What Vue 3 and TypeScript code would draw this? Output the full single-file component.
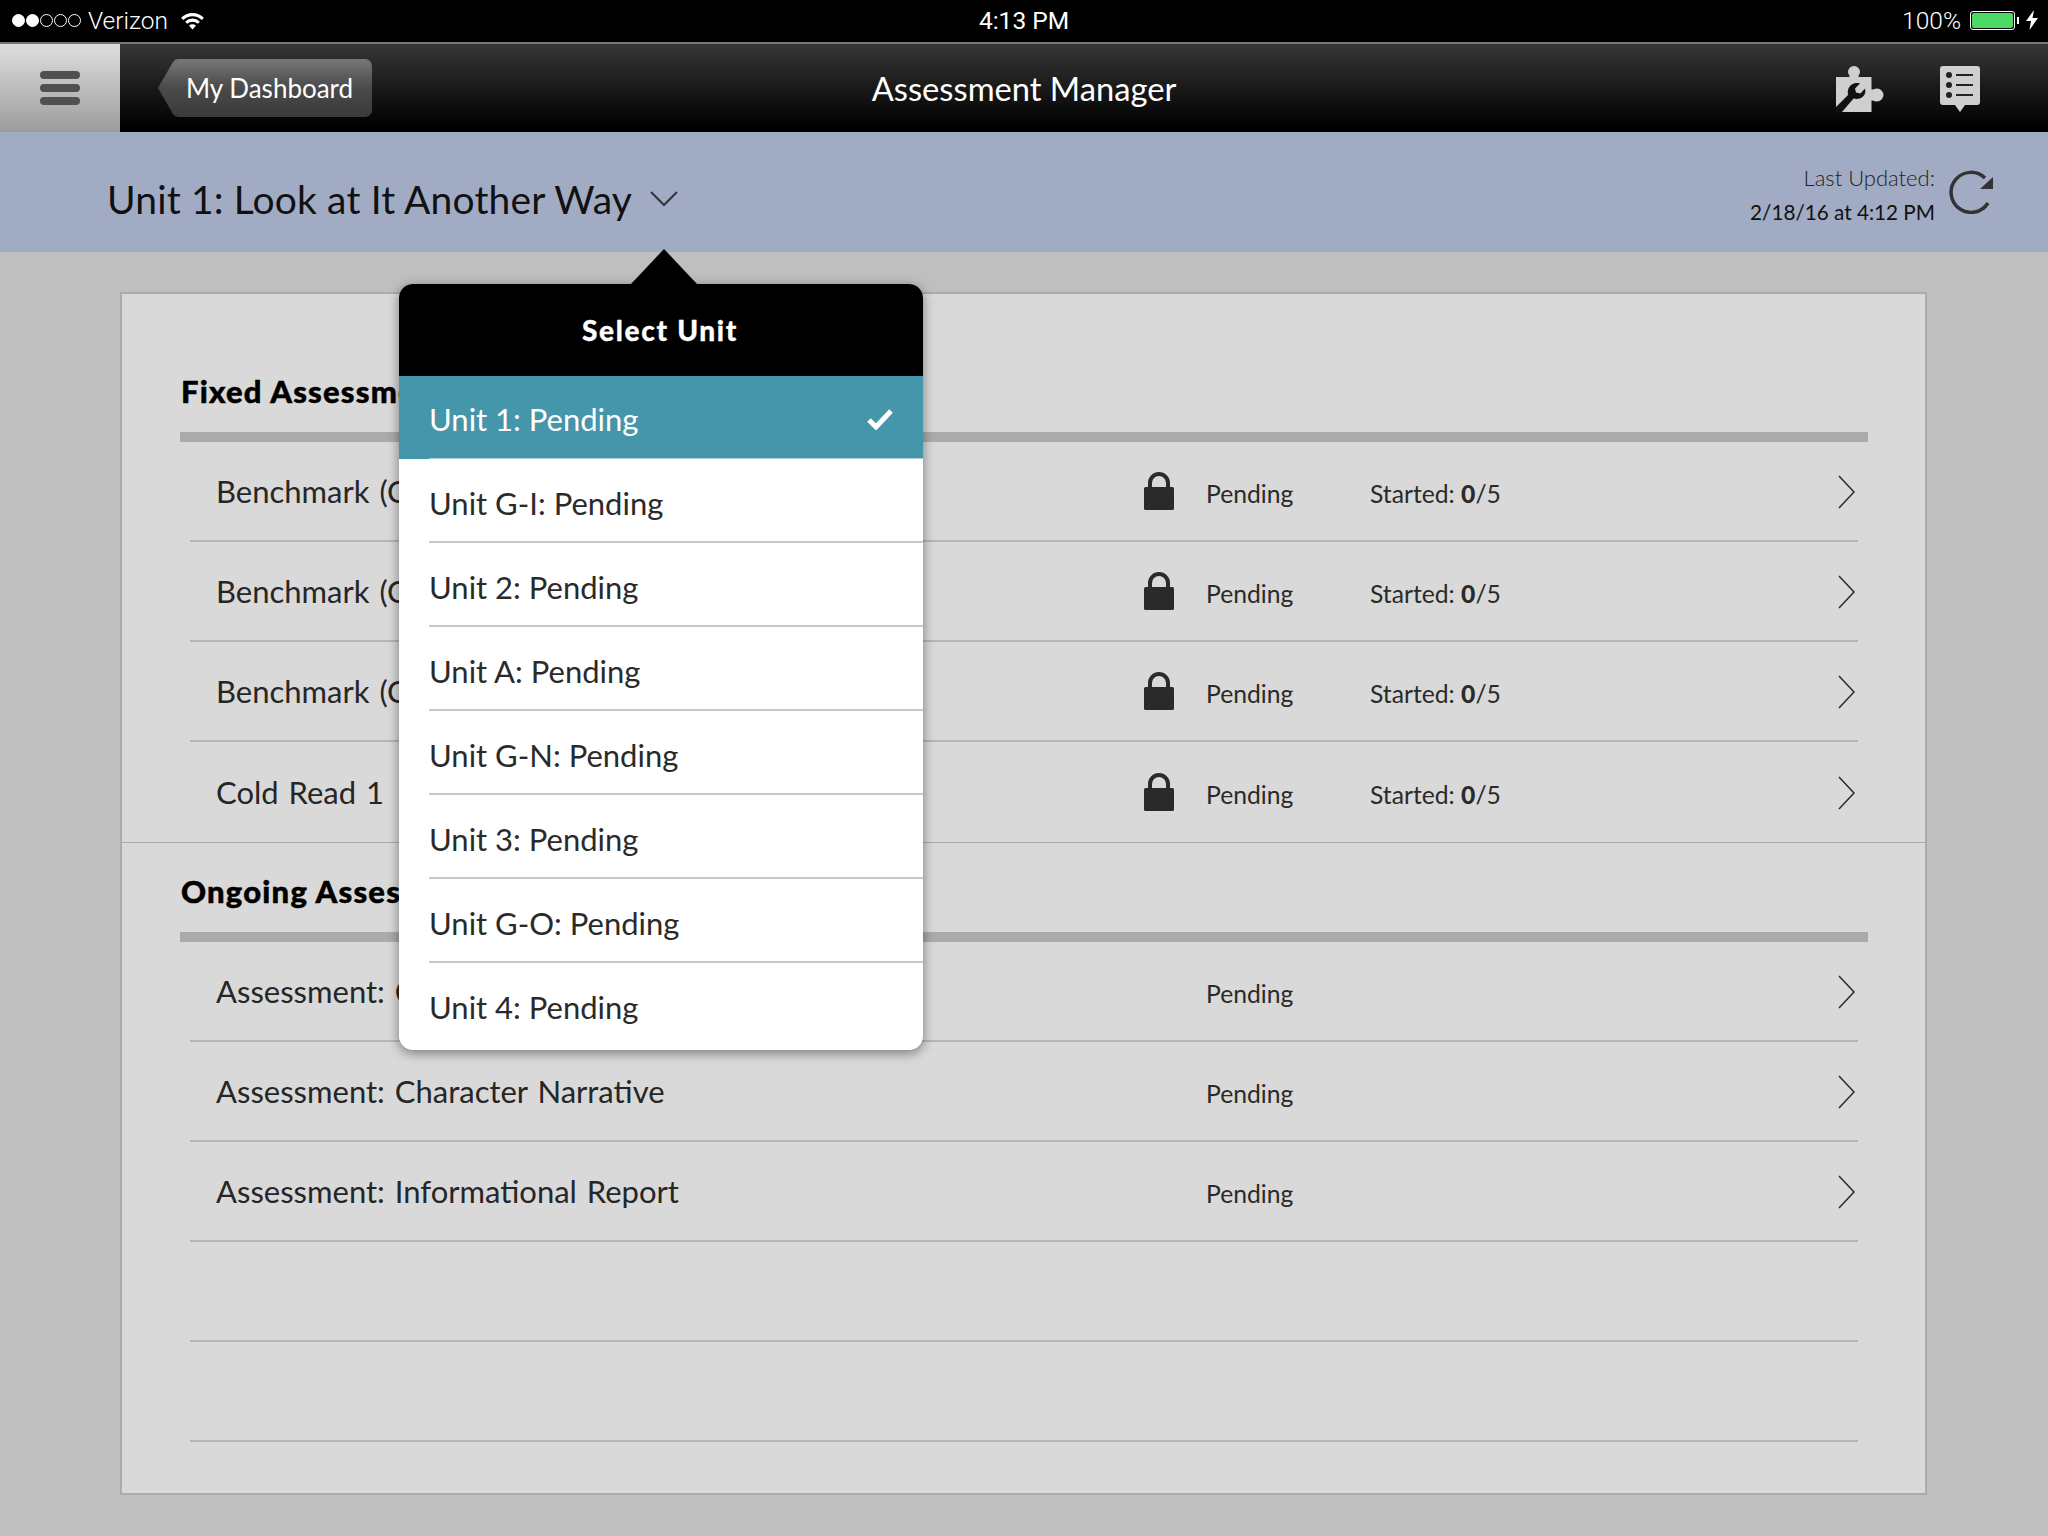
<script setup lang="ts">
interface Row { title: string; locked: boolean; started: boolean }
const fixedRows: Row[] = [
  { title: 'Benchmark (C', locked: true, started: true },
  { title: 'Benchmark (C', locked: true, started: true },
  { title: 'Benchmark (C', locked: true, started: true },
  { title: 'Cold Read 1', locked: true, started: true },
]
const ongoingRows: Row[] = [
  { title: 'Assessment: C', locked: false, started: false },
  { title: 'Assessment: Character Narrative', locked: false, started: false },
  { title: 'Assessment: Informational Report', locked: false, started: false },
]
const units: string[] = ['Unit G-I: Pending', 'Unit 2: Pending', 'Unit A: Pending', 'Unit G-N: Pending', 'Unit 3: Pending', 'Unit G-O: Pending', 'Unit 4: Pending']
</script>

<template>
  <div class="page">
    <div class="status">
      <div class="status-left">
        <span class="dots"><i class="on"></i><i class="on"></i><i></i><i></i><i></i></span>
        <span class="carrier">Verizon</span>
        <svg class="wifi" width="25" height="19" viewBox="0 0 26 20">
          <path d="M1 7 A17 17 0 0 1 25 7 L22.800 9.400 A14 14 0 0 0 3.200 9.400Z" fill="#fff"/>
          <path d="M5.200 11.200 A11 11 0 0 1 20.800 11.200 L18.600 13.500 A8 8 0 0 0 7.400 13.500Z" fill="#fff"/>
          <path d="M9.400 15.400 A5.200 5.200 0 0 1 16.600 15.400 L13 19.400Z" fill="#fff"/>
        </svg>
      </div>
      <div class="clock">4:13 PM</div>
      <div class="status-right">
        <span class="pct">100%</span>
        <span class="battery"><span class="level"></span></span>
        <span class="nub"></span>
        <svg class="bolt" width="12" height="20" viewBox="0 0 12 20"><path d="M8 0 L0 11 H5 L3.500 20 L12 8 H6.500Z" fill="#fff"/></svg>
      </div>
    </div>

    <header class="nav">
      <button class="menu-btn" aria-label="Menu"><i></i><i></i><i></i></button>
      <div class="back">
        <svg class="back-tip" width="24" height="58" viewBox="0 0 24 58">
          <defs><linearGradient id="tipg" x1="0" y1="0" x2="0" y2="1"><stop offset="0" stop-color="#777"/><stop offset="0.5" stop-color="#4a4a4a"/><stop offset="1" stop-color="#3a3a3a"/></linearGradient></defs>
          <path d="M24 0 H20 Q17 0 15 3 L0 29 L15 55 Q17 58 20 58 H24Z" fill="url(#tipg)"/>
        </svg>
        <span class="back-body">My Dashboard</span>
      </div>
      <div class="nav-title">Assessment Manager</div>
      <div class="nav-icons">
        <svg width="48" height="47" viewBox="0 0 48 47">
          <path d="M0 11 H13.500 C14 9.500 12 8 12 6 A6 6 0 0 1 24 6 C24 8 22 9.500 22.500 11 H35.500 V23.500 C37 24 38.500 22.500 41 22.500 A6.500 6.500 0 0 1 41 35.500 C38.500 35.500 37 34 35.500 34.500 V46 H8 L0 46Z" fill="#cfcfcf"/>
          <path d="M0 41 L12 29 C11 24 13 19 18 17.500 C20.500 16.800 22.500 17 24 17.500 L19 22.500 L20 26.500 L24.500 27.500 L29 22.500 C30 26 29 29 26.500 31 C24 33 20.500 33.500 17.500 32.500 L6 46 H0Z" fill="#111"/>
        </svg>
        <svg width="40" height="47" viewBox="0 0 40 47">
          <path d="M3 0 H37 Q40 0 40 3 V36 Q40 39 37 39 H25 L20 46 L15 39 H3 Q0 39 0 36 V3 Q0 0 3 0Z" fill="#cfcfcf"/>
          <circle cx="9" cy="9" r="3" fill="#222"/><circle cx="9" cy="19" r="3" fill="#222"/><circle cx="9" cy="29" r="3" fill="#222"/>
          <path d="M16 9 H33 M16 19 H33 M16 29 H33" stroke="#222" stroke-width="2"/>
        </svg>
      </div>
    </header>

    <div class="unit-bar">
      <div class="unit-name">Unit 1: Look at It Another Way</div>
      <svg class="unit-chev" width="28" height="16" viewBox="0 0 28 16"><path d="M1 1 L14 14 L27 1" fill="none" stroke="#333" stroke-width="2"/></svg>
      <div class="updated">
        <div class="upd-label">Last Updated:</div>
        <div class="upd-date">2/18/16 at 4:12 PM</div>
      </div>
      <svg class="refresh" width="46" height="44" viewBox="0 0 46 44">
        <path d="M39 33 A20 20 0 1 1 36 8" fill="none" stroke="#333" stroke-width="3.500"/>
        <path d="M44 7 V19 H31Z" fill="#333"/>
      </svg>
    </div>

    <main class="content">
      <section class="card">
        <div class="section first">
          <h2>Fixed Assessments</h2>
          <div class="rule"></div>
          <div v-for="(r, i) in fixedRows" :key="i" class="row">
            <div class="title">{{ r.title }}</div>
            <div class="lock-cell">
              <svg v-if="r.locked" width="30" height="38" viewBox="0 0 30 38">
                <path d="M6 16 V11 A9 9 0 0 1 24 11 V16" fill="none" stroke="#2a2a2a" stroke-width="4"/>
                <rect x="0" y="15" width="30" height="23" rx="1.500" fill="#2a2a2a"/>
              </svg>
            </div>
            <div class="state">Pending</div>
            <div class="started"><template v-if="r.started">Started: <b>0</b>/5</template></div>
            <svg class="chev" width="18" height="34" viewBox="0 0 18 34"><path d="M1 1 L16 17 L1 33" fill="none" stroke="#2a2a2a" stroke-width="1.500"/></svg>
          </div>
        </div>
        <div class="section">
          <h2>Ongoing Assessments</h2>
          <div class="rule"></div>
          <div v-for="(r, i) in ongoingRows" :key="i" class="row">
            <div class="title">{{ r.title }}</div>
            <div class="lock-cell"></div>
            <div class="state">Pending</div>
            <div class="started"></div>
            <svg class="chev" width="18" height="34" viewBox="0 0 18 34"><path d="M1 1 L16 17 L1 33" fill="none" stroke="#2a2a2a" stroke-width="1.500"/></svg>
          </div>
          <div class="row"></div>
          <div class="row"></div>
        </div>
      </section>
    </main>

    <div class="popover">
      <svg class="pop-arrow" width="68" height="36" viewBox="0 0 68 36"><path d="M0 36 L34 0 L68 36Z" fill="#000"/></svg>
      <div class="pop-head">Select Unit</div>
      <div class="pop-item selected">
        <span>Unit 1: Pending</span>
        <svg width="26" height="22" viewBox="0 0 26 22"><path d="M2 12 L9 19 L24 3" fill="none" stroke="#fff" stroke-width="5"/></svg>
      </div>
      <div v-for="u in units" :key="u" class="pop-item">
        <span>{{ u }}</span>
      </div>
    </div>
  </div>
</template>

<style>
html, body { margin: 0; background: #bfbfbf; }
</style>

<style scoped>
.page {
  position: relative;
  width: 2048px;
  height: 1536px;
  overflow: hidden;
  background: #bfbfbf;
  font-family: Lato, "Liberation Sans", sans-serif;
  color: #2a2a2a;
}
.status {
  height: 42px;
  box-sizing: border-box;
  padding-bottom: 2px;
  background: #000;
  color: #fff;
  display: grid;
  grid-template-columns: 1fr auto 1fr;
  align-items: center;
  font-family: Roboto, "Liberation Sans", sans-serif;
  font-weight: 300;
  font-size: 24.500px;
}
.clock { font-weight: 400; font-size: 24.500px; }
.status-left { display: flex; align-items: center; padding-left: 12px; }
.dots { display: flex; gap: 1px; margin-right: 7px; }
.dots i { width: 13px; height: 13px; box-sizing: border-box; border-radius: 50%; border: 1px solid #fff; }
.dots i.on { background: #fff; }
.wifi { margin-left: 12px; }
.status-right { display: flex; align-items: center; justify-content: flex-end; padding-right: 10px; }
.pct { margin-right: 9px; }
.battery { width: 45px; height: 19px; box-sizing: border-box; border: 1px solid #fff; border-radius: 3px; padding: 1px; display: flex; }
.level { flex: 1; background: #4cd964; border-radius: 2px; }
.nub { width: 2px; height: 7px; background: #fff; margin: 0 7px 0 2px; }
.nav {
  height: 90px;
  box-sizing: border-box;
  border-top: 2px solid #777;
  background: linear-gradient(#363636, #000 95%);
  display: flex;
  align-items: center;
  position: relative;
}
.menu-btn {
  width: 120px;
  height: 88px;
  border: 0;
  padding: 0;
  background: linear-gradient(#dedede, #9c9c9c);
  display: flex;
  flex-direction: column;
  align-items: center;
  justify-content: center;
  gap: 5px;
}
.menu-btn i { width: 40px; height: 8px; border-radius: 4px; background: #505050; }
.back { display: flex; align-items: center; margin-left: 38px; height: 58px; }
.back-tip { display: block; }
.back-body {
  height: 58px;
  line-height: 58px;
  padding: 0 19px 0 4px;
  color: #fff;
  font-size: 26px;
  background: linear-gradient(#777, #4a4a4a 50%, #3a3a3a);
  border-radius: 0 7px 7px 0;
  white-space: nowrap;
}
.nav-title {
  position: absolute;
  left: 0;
  right: 0;
  text-align: center;
  color: #fff;
  font-size: 32.700px;
  pointer-events: none;
}
.nav-icons { margin-left: auto; display: flex; align-items: center; gap: 56px; padding: 2px 68px 0 0; }
.unit-bar {
  height: 120px;
  background: #a2abc4;
  display: flex;
  align-items: center;
  padding-left: 107px;
  padding-right: 53px;
  color: #111;
}
.unit-name { font-size: 39px; letter-spacing: 0.150px; white-space: nowrap; margin-top: 14px; }
.unit-chev { margin-left: 18px; margin-top: 14px; }
.updated { margin-left: auto; text-align: right; margin-top: 6px; }
.upd-label { font-size: 22px; font-weight: 300; line-height: 34px; color: #222; }
.upd-date { font-size: 20.700px; line-height: 34px; color: #111; }
.refresh { margin-left: 14px; }
.content { padding: 40px 121px 0 120px; }
.card {
  height: 1203px;
  box-sizing: border-box;
  border: 2px solid #ababab;
  background: #d9d9d9;
}
.section { padding: 0 57px 0 58px; }
.section.first { padding-top: 49px; border-bottom: 1px solid #ababab; }
h2 {
  margin: 0;
  height: 89px;
  box-sizing: border-box;
  padding-top: 28px;
  padding-left: 1px;
  font-size: 31px;
  line-height: 40px;
  font-weight: 900;
  letter-spacing: 1.200px;
  -webkit-text-stroke: 0.500px #000;
  color: #000;
  white-space: nowrap;
}
.rule { height: 10px; background: #ababab; }
.row {
  height: 100px;
  box-sizing: border-box;
  margin: 0 10px;
  border-bottom: 2px solid #b6b6b6;
  display: grid;
  grid-template-columns: 954px 62px 164px 1fr 18px;
  align-items: center;
  padding-right: 2px;
}
.first .row:last-child { border-bottom: 0; }
.title { padding-left: 26px; font-size: 31px; word-spacing: 2px; white-space: nowrap; color: #262626; }
.lock-cell { display: flex; align-items: center; }
.state, .started { font-size: 24.700px; padding-top: 5px; white-space: nowrap; }
.started b { font-weight: 900; }
.chev { display: block; margin-top: 2px; }
.popover {
  position: absolute;
  left: 399px;
  top: 284px;
  width: 524px;
  height: 766px;
  border-radius: 14px;
  background: #fff;
  box-shadow: 0 3px 12px rgba(0, 0, 0, 0.45);
}
.pop-arrow { position: absolute; left: 231px; top: -35px; display: block; }
.pop-head {
  height: 92px;
  box-sizing: border-box;
  border-radius: 14px 14px 0 0;
  background: #000;
  color: #fff;
  font-weight: 900;
  font-size: 28px;
  letter-spacing: 1.700px;
  -webkit-text-stroke: 0.300px #fff;
  display: flex;
  align-items: center;
  justify-content: center;
  padding-right: 2px;
  position: relative;
}
.pop-item {
  height: 84px;
  box-sizing: border-box;
  margin-left: 30px;
  padding-top: 5px;
  border-bottom: 2px solid #c8c8c8;
  display: flex;
  align-items: center;
  font-size: 31px;
  color: #2a2a2a;
  position: relative;
}
.pop-item:last-child { border-bottom: 0; height: 87px; padding-top: 0; }
.pop-item.selected {
  height: 83px;
  margin-left: 0;
  padding: 2px 30px 0;
  justify-content: space-between;
  background: #4596ab;
  color: #fff;
  border-bottom: 0;
}
.pop-item.selected::after {
  content: "";
  position: absolute;
  left: 30px;
  right: 0;
  bottom: 0;
  height: 1px;
  background: #a9d0da;
}
</style>
